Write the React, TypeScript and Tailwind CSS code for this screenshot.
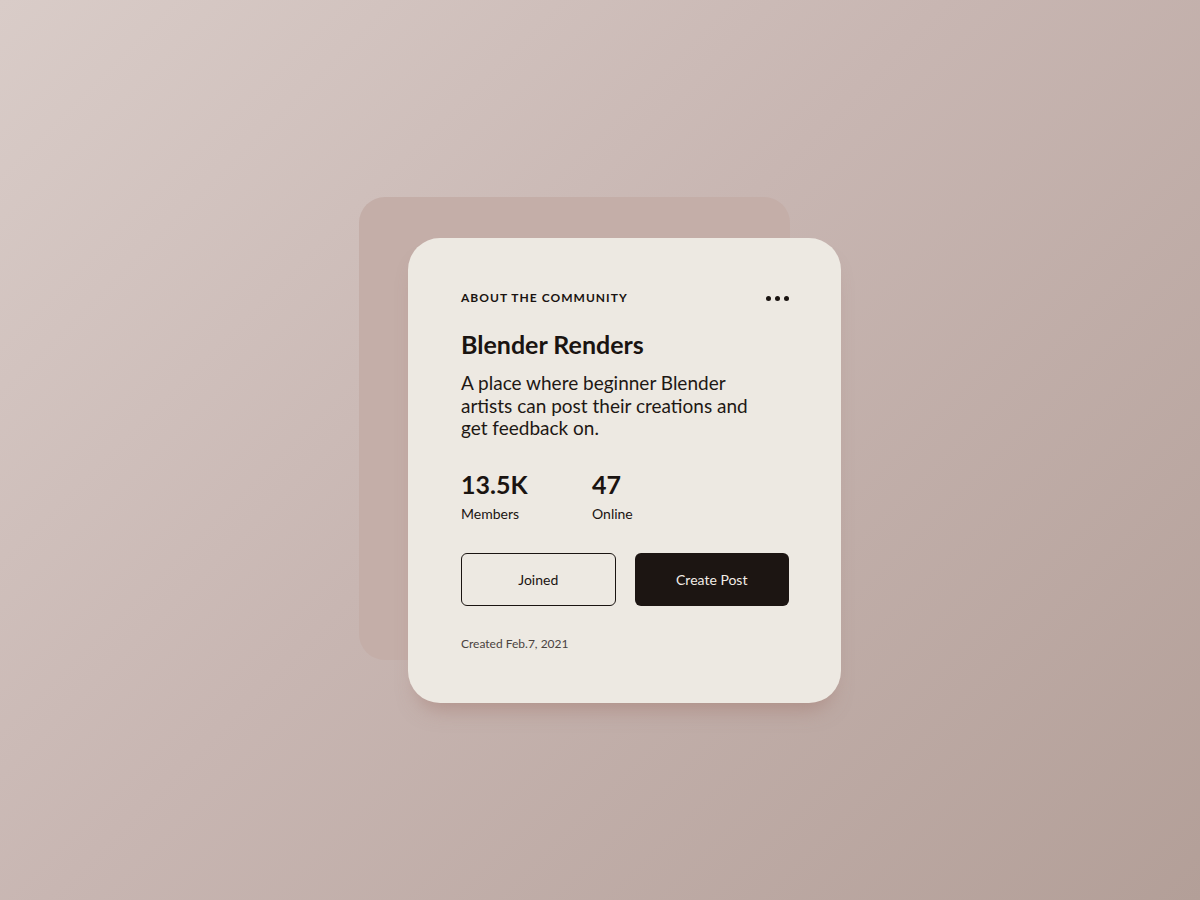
export default function App() {
  return (
    <div
      className="flex h-[900px] w-[1200px] items-center justify-center bg-[linear-gradient(135deg,#d9ccc8_0%,#c8b6b2_45%,#b39f98_100%)]"
      style={{ fontFamily: "Lato, 'Noto Sans', sans-serif" }}
    >
      <div className="relative pl-[49px] pt-[41px]">
        <div className="absolute left-0 top-0 h-[463px] w-[431px] rounded-[26px] bg-[#c4aea8]" />
        <div className="relative flex h-[465px] w-[433px] flex-col rounded-[32px] bg-[#ede9e2] pl-[53px] pr-[52px] pt-[52px] text-[#1a1411] shadow-[0_16px_20px_-10px_rgba(160,115,105,0.5)]">
          <div className="flex items-center justify-between">
            <p className="text-[12px] font-bold uppercase leading-4 tracking-[0.085em] text-[#1a1411]">
              About the community
            </p>
            <div className="flex gap-[4px]">
              <span className="h-[5px] w-[5px] rounded-full bg-[#1a1411]" />
              <span className="h-[5px] w-[5px] rounded-full bg-[#1a1411]" />
              <span className="h-[5px] w-[5px] rounded-full bg-[#1a1411]" />
            </div>
          </div>

          <h1 className="mt-[22px] text-[25px] font-bold leading-8">Blender Renders</h1>
          <p className="mt-[12px] text-[19px] leading-[22.5px] text-[#1e1814]">
            A place where beginner Blender
            <br />
            artists can post their creations and
            <br />
            get feedback on.
          </p>

          <div className="mt-[28px] flex">
            <div className="w-[131px]">
              <div className="text-[25px] font-bold leading-8">13.5K</div>
              <div className="mt-[6px] text-[14px] leading-4">Members</div>
            </div>
            <div>
              <div className="text-[25px] font-bold leading-8">47</div>
              <div className="mt-[6px] text-[14px] leading-4">Online</div>
            </div>
          </div>

          <div className="mt-[31px] flex gap-[19px]">
            <button className="h-[53px] w-[155px] rounded-[6px] border border-[#1a1411] text-[14px] text-[#1a1411]">
              Joined
            </button>
            <button className="h-[53px] w-[155px] rounded-[6px] bg-[#1c1512] text-[14px] text-[#f1ece6]">
              Create Post
            </button>
          </div>

          <p className="mt-[30px] text-[12px] leading-4 text-[#4a433f]">Created Feb.7, 2021</p>
        </div>
      </div>
    </div>
  );
}
